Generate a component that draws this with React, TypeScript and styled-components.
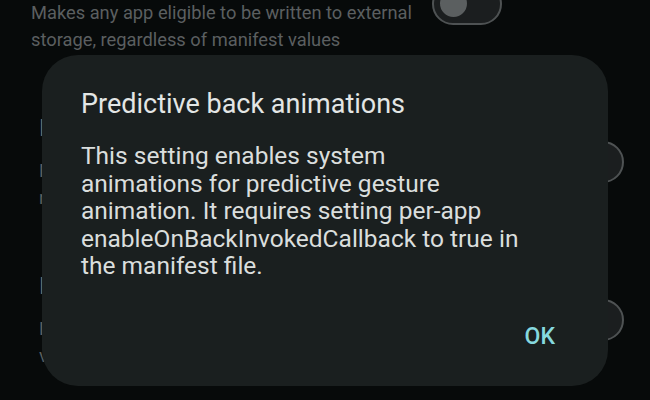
import styled, { createGlobalStyle } from 'styled-components';

const GlobalStyle = createGlobalStyle`
  html, body {
    margin: 0;
    padding: 0;
    background: #070a0a;
  }
  body {
    font-family: Roboto, "Noto Sans", sans-serif;
  }
`;

const Screen = styled.div`
  position: relative;
  width: 650px;
  height: 400px;
  overflow: hidden;
  background: #070a0a;
`;

const List = styled.div`
  display: flex;
  flex-direction: column;
  margin-top: -75px;
`;

const Row = styled.div<{ $left: number; $right: number }>`
  display: flex;
  align-items: center;
  gap: 18px;
  padding: 29px ${({ $right }) => $right}px 29px ${({ $left }) => $left}px;
  height: 158px;
  box-sizing: border-box;
`;

const RowText = styled.div`
  flex: 1;
  min-width: 0;
  display: flex;
  flex-direction: column;
  gap: 14px;
  white-space: nowrap;
`;

const RowTitle = styled.div`
  font-size: 24px;
  line-height: 30px;
  color: #6c7071;
`;

const RowSummary = styled.div`
  font-size: 18.3px;
  line-height: 27px;
  color: #5b5f60;
`;

const Switch = styled.div`
  flex: none;
  position: relative;
  width: 70px;
  height: 42px;
  box-sizing: border-box;
  border: 2px solid #4e5253;
  border-radius: 21px;
  background: #1b1e1f;
`;

const Thumb = styled.span`
  position: absolute;
  left: 6px;
  top: 5px;
  width: 27px;
  height: 27px;
  border-radius: 50%;
  background: #5b5f60;
`;

const Dialog = styled.div`
  position: absolute;
  left: 42px;
  top: 55px;
  width: 566px;
  height: 331px;
  box-sizing: border-box;
  border-radius: 36px;
  background: #1a1f1f;
  padding: 32px 39px 0 39px;
  display: flex;
  flex-direction: column;
`;

const DialogTitle = styled.h2`
  margin: 0;
  font-size: 27px;
  line-height: 34px;
  font-weight: 400;
  color: #e3e6e5;
`;

const DialogBody = styled.p`
  margin: 21px 0 0;
  font-size: 24.5px;
  line-height: 27.5px;
  color: #dadedd;
  white-space: nowrap;
`;

const Actions = styled.div`
  display: flex;
  justify-content: flex-end;
  margin-top: 43px;
`;

const TextButton = styled.button`
  border: none;
  background: none;
  padding: 0 14px;
  font-family: Roboto, sans-serif;
  font-size: 23px;
  line-height: 28px;
  font-weight: 500;
  color: #86d8de;
`;

export default function App() {
  return (
    <>
      <GlobalStyle />
      <Screen>
        <List>
          <Row $left={31} $right={148}>
            <RowText>
              <RowTitle>Enable write to external storage</RowTitle>
              <RowSummary>
                Makes any app eligible to be written to external
                <br />
                storage, regardless of manifest values
              </RowSummary>
            </RowText>
            <Switch>
              <Thumb />
            </Switch>
          </Row>
          <Row $left={39} $right={26}>
            <RowText>
              <RowTitle>Force activities to be resizable</RowTitle>
              <RowSummary>
                Make all activities resizable for multi-window,
                <br />
                regardless of manifest values.
              </RowSummary>
            </RowText>
            <Switch>
              <Thumb />
            </Switch>
          </Row>
          <Row $left={39} $right={26}>
            <RowText>
              <RowTitle>Enable non-resizable in multi window</RowTitle>
              <RowSummary>
                Lets non-resizable apps be in multi window,
                <br />
                valid for all tasks.
              </RowSummary>
            </RowText>
            <Switch>
              <Thumb />
            </Switch>
          </Row>
        </List>

        <Dialog role="dialog">
          <DialogTitle>Predictive back animations</DialogTitle>
          <DialogBody>
            This setting enables system
            <br />
            animations for predictive gesture
            <br />
            animation. It requires setting per-app
            <br />
            enableOnBackInvokedCallback to true in
            <br />
            the manifest file.
          </DialogBody>
          <Actions>
            <TextButton>OK</TextButton>
          </Actions>
        </Dialog>
      </Screen>
    </>
  );
}
